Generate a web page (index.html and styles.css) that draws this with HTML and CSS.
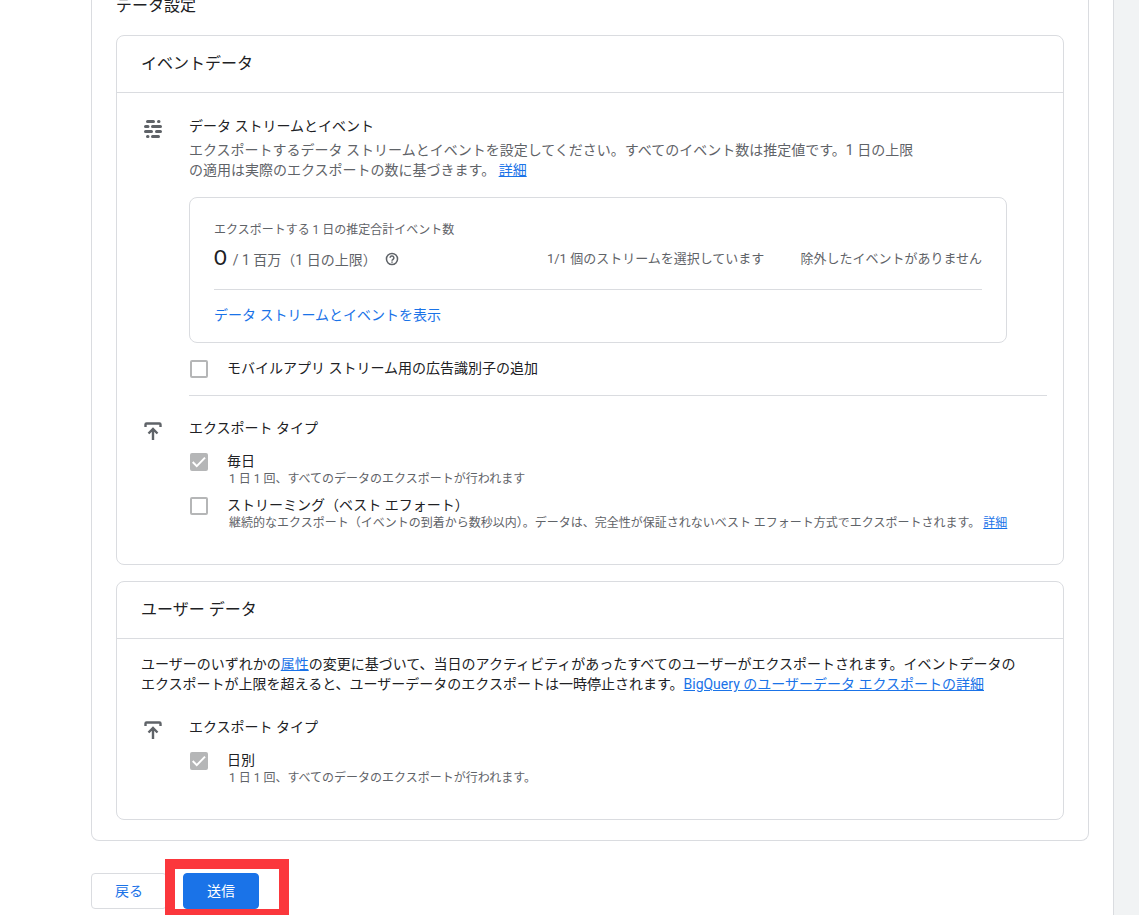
FILE: index.html
```html
<!DOCTYPE html>
<html lang="ja">
<head>
    <meta charset="UTF-8">
    <meta name="viewport" content="width=device-width, initial-scale=1.0">
    <title>データ設定</title>
    <link rel="stylesheet" href="styles.css">
</head>
<body>

<div class="page">
    <main class="main">
        <div class="panel">
            <h1>データ設定</h1>

            <section class="card">
                <h2>イベントデータ</h2>
                <div class="card-body">
                    <div class="row">
                        <svg class="icon" viewBox="0 0 24 24" fill="none" stroke="#5f6368" stroke-width="3" stroke-linecap="round" aria-hidden="true">
                            <path d="M6.5 4.5h6M17.5 4.5h.5M4.5 9.5h2.5M11.5 9.5h8M4.5 14.5h6M15.5 14.5h4M6.5 19.5h.5M11.5 19.5h6"/>
                        </svg>
                        <div class="content">
                            <h3>データ ストリームとイベント</h3>
                            <p class="description">エクスポートするデータ ストリームとイベントを設定してください。すべてのイベント数は推定値です。1 日の上限の適用は実際のエクスポートの数に基づきます。 <a href="#">詳細</a></p>

                            <div class="summary">
                                <p class="caption">エクスポートする 1 日の推定合計イベント数</p>
                                <div class="stats">
                                    <div class="limit">
                                        <span class="count">0</span>
                                        <span>/ 1 百万（1 日の上限）</span>
                                        <svg class="help" viewBox="0 0 24 24" fill="none" stroke="#5f6368" stroke-width="2.6" aria-hidden="true">
                                            <circle cx="12" cy="12" r="9.5"/>
                                            <path d="M8.8 10a3.2 3.2 0 1 1 5 2.6c-1.2.8-1.8 1.2-1.8 2.4M12 16.2v2.4"/>
                                        </svg>
                                    </div>
                                    <span>1/1 個のストリームを選択しています</span>
                                    <span>除外したイベントがありません</span>
                                </div>
                                <button type="button" class="show-link">データ ストリームとイベントを表示</button>
                            </div>

                            <div class="option">
                                <input type="checkbox" id="ads">
                                <label for="ads">モバイルアプリ ストリーム用の広告識別子の追加</label>
                            </div>
                        </div>
                    </div>

                    <div class="row">
                        <svg class="icon" viewBox="0 0 24 24" fill="none" stroke="#5f6368" stroke-width="2.4" aria-hidden="true">
                            <path d="M4.5 8V5.5q0-1 1-1h13q1 0 1 1V8M12 21V10M7.5 14.5L12 10l4.5 4.5"/>
                        </svg>
                        <div class="content types">
                            <h3>エクスポート タイプ</h3>
                            <div class="option">
                                <input type="checkbox" id="daily" checked disabled>
                                <div>
                                    <label for="daily">毎日</label>
                                    <p class="note">1 日 1 回、すべてのデータのエクスポートが行われます</p>
                                </div>
                            </div>
                            <div class="option">
                                <input type="checkbox" id="streaming">
                                <div>
                                    <label for="streaming">ストリーミング（ベスト エフォート）</label>
                                    <p class="note">継続的なエクスポート（イベントの到着から数秒以内）。データは、完全性が保証されないベスト エフォート方式でエクスポートされます。 <a href="#">詳細</a></p>
                                </div>
                            </div>
                        </div>
                    </div>
                </div>
            </section>

            <section class="card">
                <h2>ユーザー データ</h2>
                <div class="card-body">
                    <p class="user-text">ユーザーのいずれかの<a href="#">属性</a>の変更に基づいて、当日のアクティビティがあったすべてのユーザーがエクスポートされます。イベントデータの<br>エクスポートが上限を超えると、ユーザーデータのエクスポートは一時停止されます。<a href="#">BigQuery のユーザーデータ エクスポートの詳細</a></p>
                    <div class="row">
                        <svg class="icon" viewBox="0 0 24 24" fill="none" stroke="#5f6368" stroke-width="2.4" aria-hidden="true">
                            <path d="M4.5 8V5.5q0-1 1-1h13q1 0 1 1V8M12 21V10M7.5 14.5L12 10l4.5 4.5"/>
                        </svg>
                        <div class="content types">
                            <h3>エクスポート タイプ</h3>
                            <div class="option">
                                <input type="checkbox" id="user-daily" checked disabled>
                                <div>
                                    <label for="user-daily">日別</label>
                                    <p class="note">1 日 1 回、すべてのデータのエクスポートが行われます。</p>
                                </div>
                            </div>
                        </div>
                    </div>
                </div>
            </section>
        </div>

        <div class="actions">
            <button type="button" class="back">戻る</button>
            <div class="highlight">
                <button type="submit" class="submit">送信</button>
            </div>
        </div>
    </main>
    <aside class="rail"></aside>
</div>

</body>
</html>
```

FILE: styles.css
```css
* {
    box-sizing: border-box;
}
body {
    margin: 0;
    font-family: Roboto, "Noto Sans CJK JP", sans-serif;
    font-size: 14px;
    line-height: 20px;
    color: #202124;
    background-color: #fff;
}
h1, h2, h3, p {
    margin: 0;
    font-weight: 400;
}
a {
    color: #1a73e8;
}
button {
    font: inherit;
    cursor: pointer;
}
.page {
    display: flex;
    height: 100vh;
    overflow: hidden;
}
.main {
    flex: 1;
    padding: 0 24px 0 91px;
}
.rail {
    width: 26px;
    background-color: #f1f3f4;
    border-left: 1px solid #dadce0;
}
.panel {
    padding: 0 24px 20px;
    border: 1px solid #dadce0;
    border-top: none;
    border-radius: 0 0 8px 8px;
}
h1 {
    font-size: 16px;
    line-height: 12px;
    margin-bottom: 23px;
}
.card {
    border: 1px solid #dadce0;
    border-radius: 8px;
}
.card + .card {
    margin-top: 16px;
}
h2 {
    padding: 16px 24px;
    font-size: 16px;
    line-height: 24px;
    border-bottom: 1px solid #dadce0;
}
.card-body {
    padding: 23px 16px 33px 24px;
}
.row {
    display: flex;
    gap: 24px;
}
.row + .row {
    margin-top: 22px;
}
.icon {
    flex: none;
    width: 24px;
    height: 24px;
    margin-top: 1px;
}
h3 {
    font-size: 14px;
}
.content {
    flex: 1;
}
.content:not(.types) {
    border-bottom: 1px solid #dadce0;
    padding-bottom: 17px;
}
.description {
    max-width: 732px;
    margin-top: 4px;
    color: #5f6368;
}
.summary {
    margin: 17px 40px 16px 0;
    padding: 22px 24px 17px;
    border: 1px solid #dadce0;
    border-radius: 8px;
    color: #5f6368;
}
.caption {
    font-size: 12px;
}
.stats {
    display: flex;
    align-items: center;
    gap: 36px;
    padding: 5px 0 17px;
    font-size: 13px;
    line-height: 24px;
    border-bottom: 1px solid #dadce0;
}
.limit {
    display: flex;
    align-items: baseline;
    gap: 6px;
    margin-right: auto;
    font-size: 14px;
}
.count {
    font-family: Lato, Roboto, sans-serif;
    font-size: 22px;
    color: #202124;
}
.help {
    width: 14px;
    height: 14px;
    margin-left: 2px;
    align-self: center;
}
.show-link {
    margin-top: 15px;
    padding: 0;
    border: none;
    background: none;
    color: #1a73e8;
}
.option {
    display: flex;
    gap: 19px;
}
.option label {
    display: block;
    line-height: 18px;
}
.types .option {
    margin-top: 8px;
}
.types .option label {
    line-height: 20px;
}
.types h3 {
    margin-bottom: 13px;
}
.note {
    padding-left: 2px;
    font-size: 12px;
    line-height: 16px;
    color: #5f6368;
}
input[type="checkbox"] {
    appearance: none;
    flex: none;
    width: 18px;
    height: 18px;
    margin: 1px 0 0 1px;
    border: 2px solid #b5b6b7;
    border-radius: 2px;
}
.types input[type="checkbox"] {
    margin-top: 2px;
}
input[type="checkbox"]:checked {
    background-color: #b5b6b7;
}
input[type="checkbox"]:checked::before {
    content: "";
    display: block;
    width: 14px;
    height: 14px;
    background-color: #fff;
    clip-path: polygon(0 55%, 10% 45%, 34% 69%, 88% 14%, 98% 24%, 34% 89%);
}
.user-text {
    margin: -8px 0 23px;
}
.actions {
    display: flex;
    gap: 16px;
    margin-top: 32px;
}
.back, .submit {
    height: 36px;
    padding: 0 23px;
    border: 1px solid #dadce0;
    border-radius: 4px;
    background-color: #fff;
    color: #1a73e8;
}
.submit {
    border-color: #1a73e8;
    background-color: #1a73e8;
    color: #fff;
}
.highlight {
    position: relative;
}
/* red frame over the buttons */
.highlight::after {
    content: "";
    position: absolute;
    top: -14px;
    left: -18px;
    right: -30px;
    bottom: -10px;
    border: 10px solid #fb373c;
    pointer-events: none;
}
```
